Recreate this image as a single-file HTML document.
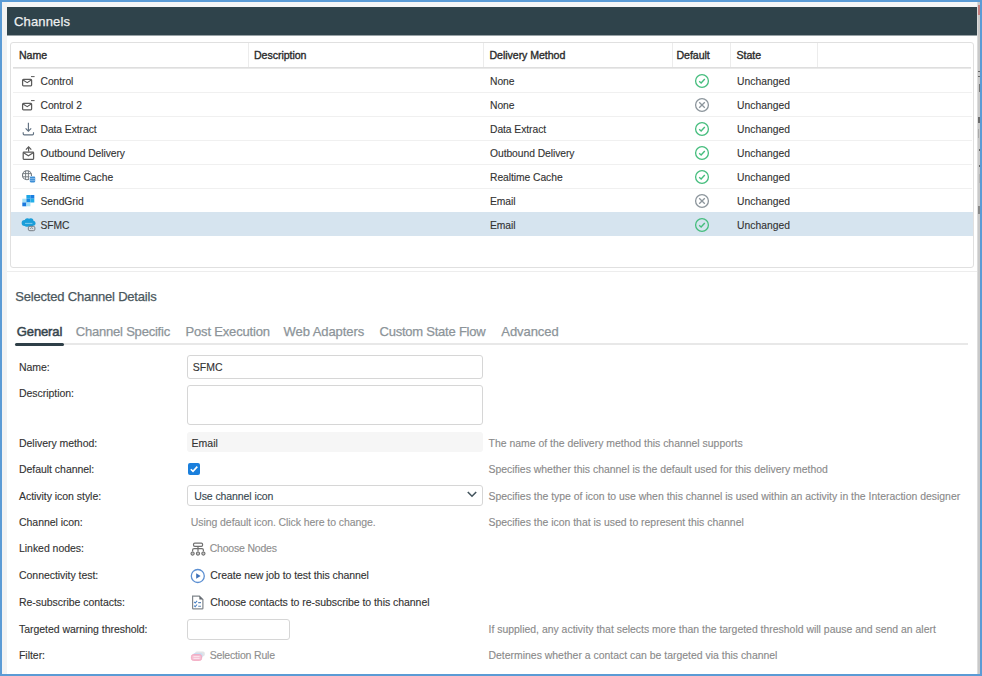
<!DOCTYPE html>
<html><head><meta charset="utf-8">
<style>
*{box-sizing:border-box;margin:0;padding:0}
html,body{width:982px;height:676px;overflow:hidden;background:#fff}
body{font-family:"Liberation Sans",sans-serif;position:relative}
.a{position:absolute;white-space:nowrap}
svg{display:block}
</style></head><body>
<div class="a" style="left:0px;top:0px;width:982px;height:676px;background:#5b9bd5"></div>
<div class="a" style="left:2px;top:2px;width:978px;height:672px;background:#fff"></div>
<div class="a" style="left:2px;top:2px;width:975px;height:5px;background:#f6f6f6"></div>
<div class="a" style="left:2px;top:2px;width:5px;height:672px;background:#f3f3f3"></div>
<div class="a" style="left:977px;top:2px;width:3px;height:672px;background:#c9c9c9"></div>
<div class="a" style="left:977px;top:2px;width:1px;height:672px;background:#dcdcdc"></div>
<div class="a" style="left:978px;top:5px;width:2px;height:10px;background:#c47f7f"></div>
<div class="a" style="left:978px;top:71px;width:2px;height:1px;background:#666"></div>
<div class="a" style="left:978px;top:76px;width:2px;height:1px;background:#666"></div>
<div class="a" style="left:979px;top:84px;width:1px;height:8px;background:#777"></div>
<div class="a" style="left:978px;top:117px;width:2px;height:6px;background:#6a6a6a"></div>
<div class="a" style="left:978px;top:129px;width:1px;height:9px;background:#aaa"></div>
<div class="a" style="left:979px;top:149px;width:1px;height:2px;background:#666"></div>
<div class="a" style="left:979px;top:165px;width:1px;height:2px;background:#666"></div>
<div class="a" style="left:979px;top:174px;width:1px;height:9px;background:#b5b5b5"></div>
<div class="a" style="left:978px;top:206px;width:2px;height:8px;background:#888"></div>
<div class="a" style="left:7px;top:7px;width:970px;height:28px;background:#2f434b"></div>
<div class="a" style="left:7px;top:35px;width:970px;height:1px;background:#98a2a6"></div>
<div class="a" style="left:14px;top:15.00px;font-size:13px;line-height:14px;color:#eef0f1;font-weight:normal;-webkit-text-stroke:0.25px #eef0f1;letter-spacing:0.14px;">Channels</div>
<div class="a" style="left:10px;top:42px;width:964px;height:226px;border:1px solid #e0e0e0;border-radius:3px;background:#fff"></div>
<div class="a" style="left:248px;top:43px;width:1px;height:25px;background:#ececec"></div>
<div class="a" style="left:483px;top:43px;width:1px;height:25px;background:#ececec"></div>
<div class="a" style="left:672px;top:43px;width:1px;height:25px;background:#ececec"></div>
<div class="a" style="left:730px;top:43px;width:1px;height:25px;background:#ececec"></div>
<div class="a" style="left:817px;top:43px;width:1px;height:25px;background:#ececec"></div>
<div class="a" style="left:13px;top:67px;width:958px;height:1px;background:#dedede"></div>
<div class="a" style="left:13px;top:68px;width:958px;height:1px;background:#e9e9e9"></div>
<div class="a" style="left:19px;top:48.00px;font-size:10.6px;line-height:14px;color:#2b2b2b;font-weight:normal;-webkit-text-stroke:0.35px #2b2b2b;letter-spacing:-0.05px;">Name</div>
<div class="a" style="left:254px;top:48.00px;font-size:10.6px;line-height:14px;color:#2b2b2b;font-weight:normal;-webkit-text-stroke:0.35px #2b2b2b;letter-spacing:-0.05px;">Description</div>
<div class="a" style="left:489.5px;top:48.00px;font-size:10.6px;line-height:14px;color:#2b2b2b;font-weight:normal;-webkit-text-stroke:0.35px #2b2b2b;letter-spacing:-0.05px;">Delivery Method</div>
<div class="a" style="left:676.5px;top:48.00px;font-size:10.6px;line-height:14px;color:#2b2b2b;font-weight:normal;-webkit-text-stroke:0.35px #2b2b2b;letter-spacing:-0.05px;">Default</div>
<div class="a" style="left:736.5px;top:48.00px;font-size:10.6px;line-height:14px;color:#2b2b2b;font-weight:normal;-webkit-text-stroke:0.35px #2b2b2b;letter-spacing:-0.05px;">State</div>
<div class="a" style="left:13px;top:92px;width:959px;height:1px;background:#f0f0f0"></div>
<div class="a" style="left:18px;top:68px;width:20px;height:24px"><svg width="20" height="24" viewBox="0 0 20 24"><path d="M4.6 12.2 Q4.6 11.3 5.5 11.3 H12.9 Q13.6 11.3 13.6 12.2 V17 Q13.6 17.8 12.9 17.8 H5.5 Q4.6 17.8 4.6 17 Z" fill="none" stroke="#5a5a5a" stroke-width="1.25"/><path d="M5 12 L9.2 14.6 L13.2 12" fill="none" stroke="#5a5a5a" stroke-width="1.1"/><path d="M13 8.6 H16.6" stroke="#5a5a5a" stroke-width="1"/></svg></div>
<div class="a" style="left:40.5px;top:75.00px;font-size:10.3px;line-height:14px;color:#333333;font-weight:normal;letter-spacing:-0.05px;-webkit-text-stroke:0.12px #333333;">Control</div>
<div class="a" style="left:490px;top:75.00px;font-size:10.3px;line-height:14px;color:#333333;font-weight:normal;letter-spacing:-0.05px;-webkit-text-stroke:0.12px #333333;">None</div>
<div class="a" style="left:737px;top:75.00px;font-size:10.3px;line-height:14px;color:#333333;font-weight:normal;letter-spacing:0.05px;-webkit-text-stroke:0.12px #333333;">Unchanged</div>
<div class="a" style="left:694px;top:73px;width:16px;height:16px"><svg width="16" height="16" viewBox="0 0 16 16"><circle cx="8" cy="8" r="6.4" fill="none" stroke="#45bd7d" stroke-width="1.3"/><path d="M5.2 8.3 L7.1 10 L10.8 6" fill="none" stroke="#45bd7d" stroke-width="1.4"/></svg></div>
<div class="a" style="left:13px;top:116px;width:959px;height:1px;background:#f0f0f0"></div>
<div class="a" style="left:18px;top:92px;width:20px;height:24px"><svg width="20" height="24" viewBox="0 0 20 24"><path d="M4.6 12.2 Q4.6 11.3 5.5 11.3 H12.9 Q13.6 11.3 13.6 12.2 V17 Q13.6 17.8 12.9 17.8 H5.5 Q4.6 17.8 4.6 17 Z" fill="none" stroke="#5a5a5a" stroke-width="1.25"/><path d="M5 12 L9.2 14.6 L13.2 12" fill="none" stroke="#5a5a5a" stroke-width="1.1"/><path d="M13 8.6 H16.6" stroke="#5a5a5a" stroke-width="1"/></svg></div>
<div class="a" style="left:40.5px;top:99.00px;font-size:10.3px;line-height:14px;color:#333333;font-weight:normal;letter-spacing:-0.05px;-webkit-text-stroke:0.12px #333333;">Control 2</div>
<div class="a" style="left:490px;top:99.00px;font-size:10.3px;line-height:14px;color:#333333;font-weight:normal;letter-spacing:-0.05px;-webkit-text-stroke:0.12px #333333;">None</div>
<div class="a" style="left:737px;top:99.00px;font-size:10.3px;line-height:14px;color:#333333;font-weight:normal;letter-spacing:0.05px;-webkit-text-stroke:0.12px #333333;">Unchanged</div>
<div class="a" style="left:694px;top:97px;width:16px;height:16px"><svg width="16" height="16" viewBox="0 0 16 16"><circle cx="8" cy="8" r="6.4" fill="none" stroke="#8c959c" stroke-width="1.3"/><path d="M5.2 5.2 L10.8 10.8 M10.8 5.2 L5.2 10.8" fill="none" stroke="#8c959c" stroke-width="1.3"/></svg></div>
<div class="a" style="left:13px;top:140px;width:959px;height:1px;background:#f0f0f0"></div>
<div class="a" style="left:18px;top:116px;width:20px;height:24px"><svg width="20" height="24" viewBox="0 0 20 24"><path d="M10.4 6.8 V15" stroke="#607080" stroke-width="1.15" fill="none"/><path d="M7.6 12.3 L10.4 15.1 L13.2 12.3" stroke="#607080" stroke-width="1.15" fill="none"/><path d="M5.2 16.3 V17.8 Q5.2 18.8 6.2 18.8 H14.5 Q15.5 18.8 15.5 17.8 V16.3" stroke="#607080" stroke-width="1.15" fill="none"/></svg></div>
<div class="a" style="left:40.5px;top:123.00px;font-size:10.3px;line-height:14px;color:#333333;font-weight:normal;letter-spacing:-0.05px;-webkit-text-stroke:0.12px #333333;">Data Extract</div>
<div class="a" style="left:490px;top:123.00px;font-size:10.3px;line-height:14px;color:#333333;font-weight:normal;letter-spacing:-0.05px;-webkit-text-stroke:0.12px #333333;">Data Extract</div>
<div class="a" style="left:737px;top:123.00px;font-size:10.3px;line-height:14px;color:#333333;font-weight:normal;letter-spacing:0.05px;-webkit-text-stroke:0.12px #333333;">Unchanged</div>
<div class="a" style="left:694px;top:121px;width:16px;height:16px"><svg width="16" height="16" viewBox="0 0 16 16"><circle cx="8" cy="8" r="6.4" fill="none" stroke="#45bd7d" stroke-width="1.3"/><path d="M5.2 8.3 L7.1 10 L10.8 6" fill="none" stroke="#45bd7d" stroke-width="1.4"/></svg></div>
<div class="a" style="left:13px;top:164px;width:959px;height:1px;background:#f0f0f0"></div>
<div class="a" style="left:18px;top:140px;width:20px;height:24px"><svg width="20" height="24" viewBox="0 0 20 24"><path d="M10.6 11.5 V7.5" stroke="#5a5a5a" stroke-width="1.2"/><path d="M7.9 9.6 L10.6 6.9 L13.3 9.6" stroke="#5a5a5a" stroke-width="1.25" fill="none"/><path d="M5.2 12.9 Q5.2 12.2 5.9 12.2 H14.9 Q15.6 12.2 15.6 12.9 V18.6 Q15.6 19.3 14.9 19.3 H5.9 Q5.2 19.3 5.2 18.6 Z" fill="none" stroke="#5a5a5a" stroke-width="1.25"/><path d="M5.6 12.8 L10.4 15.8 L15.2 12.8" fill="none" stroke="#5a5a5a" stroke-width="1.15"/></svg></div>
<div class="a" style="left:40.5px;top:147.00px;font-size:10.3px;line-height:14px;color:#333333;font-weight:normal;letter-spacing:-0.05px;-webkit-text-stroke:0.12px #333333;">Outbound Delivery</div>
<div class="a" style="left:490px;top:147.00px;font-size:10.3px;line-height:14px;color:#333333;font-weight:normal;letter-spacing:-0.05px;-webkit-text-stroke:0.12px #333333;">Outbound Delivery</div>
<div class="a" style="left:737px;top:147.00px;font-size:10.3px;line-height:14px;color:#333333;font-weight:normal;letter-spacing:0.05px;-webkit-text-stroke:0.12px #333333;">Unchanged</div>
<div class="a" style="left:694px;top:145px;width:16px;height:16px"><svg width="16" height="16" viewBox="0 0 16 16"><circle cx="8" cy="8" r="6.4" fill="none" stroke="#45bd7d" stroke-width="1.3"/><path d="M5.2 8.3 L7.1 10 L10.8 6" fill="none" stroke="#45bd7d" stroke-width="1.4"/></svg></div>
<div class="a" style="left:13px;top:188px;width:959px;height:1px;background:#f0f0f0"></div>
<div class="a" style="left:18px;top:164px;width:20px;height:24px"><svg width="20" height="24" viewBox="0 0 20 24"><circle cx="9" cy="11.2" r="4.5" fill="none" stroke="#6f767c" stroke-width="1.1"/><path d="M4.6 9.6 H13.4 M4.6 12.8 H13.4 M7.6 6.8 V15.6 M10.4 6.8 V15.6" stroke="#6f767c" stroke-width="0.9" fill="none"/><rect x="11.2" y="12" width="6.6" height="7" rx="1.4" fill="#fff"/><rect x="11.8" y="12.6" width="5.4" height="5.8" rx="1.1" fill="#3e8fd6"/><path d="M11.8 14.5 H17.2 M11.8 16.4 H17.2" stroke="#a9cdef" stroke-width="0.6"/></svg></div>
<div class="a" style="left:40.5px;top:171.00px;font-size:10.3px;line-height:14px;color:#333333;font-weight:normal;letter-spacing:-0.05px;-webkit-text-stroke:0.12px #333333;">Realtime Cache</div>
<div class="a" style="left:490px;top:171.00px;font-size:10.3px;line-height:14px;color:#333333;font-weight:normal;letter-spacing:-0.05px;-webkit-text-stroke:0.12px #333333;">Realtime Cache</div>
<div class="a" style="left:737px;top:171.00px;font-size:10.3px;line-height:14px;color:#333333;font-weight:normal;letter-spacing:0.05px;-webkit-text-stroke:0.12px #333333;">Unchanged</div>
<div class="a" style="left:694px;top:169px;width:16px;height:16px"><svg width="16" height="16" viewBox="0 0 16 16"><circle cx="8" cy="8" r="6.4" fill="none" stroke="#45bd7d" stroke-width="1.3"/><path d="M5.2 8.3 L7.1 10 L10.8 6" fill="none" stroke="#45bd7d" stroke-width="1.4"/></svg></div>
<div class="a" style="left:13px;top:212px;width:959px;height:1px;background:#f0f0f0"></div>
<div class="a" style="left:18px;top:188px;width:20px;height:24px"><svg width="20" height="24" viewBox="0 0 20 24"><rect x="8.4" y="7" width="4" height="3.7" fill="#1ea6e6"/><rect x="12.4" y="7" width="3.9" height="3.7" fill="#1a7fe0"/><rect x="4.3" y="10.7" width="4.1" height="3.8" fill="#a6e0f5"/><rect x="8.4" y="10.7" width="4" height="3.8" fill="#1689e2"/><rect x="12.4" y="10.7" width="3.9" height="3.8" fill="#22aee8"/><rect x="4.3" y="14.5" width="4.1" height="3.8" fill="#1a79de"/><rect x="8.4" y="14.5" width="4" height="3.8" fill="#a6e0f5"/></svg></div>
<div class="a" style="left:40.5px;top:195.00px;font-size:10.3px;line-height:14px;color:#333333;font-weight:normal;letter-spacing:-0.05px;-webkit-text-stroke:0.12px #333333;">SendGrid</div>
<div class="a" style="left:490px;top:195.00px;font-size:10.3px;line-height:14px;color:#333333;font-weight:normal;letter-spacing:-0.05px;-webkit-text-stroke:0.12px #333333;">Email</div>
<div class="a" style="left:737px;top:195.00px;font-size:10.3px;line-height:14px;color:#333333;font-weight:normal;letter-spacing:0.05px;-webkit-text-stroke:0.12px #333333;">Unchanged</div>
<div class="a" style="left:694px;top:193px;width:16px;height:16px"><svg width="16" height="16" viewBox="0 0 16 16"><circle cx="8" cy="8" r="6.4" fill="none" stroke="#8c959c" stroke-width="1.3"/><path d="M5.2 5.2 L10.8 10.8 M10.8 5.2 L5.2 10.8" fill="none" stroke="#8c959c" stroke-width="1.3"/></svg></div>
<div class="a" style="left:11px;top:212px;width:962px;height:24px;background:#d6e4ef"></div>
<div class="a" style="left:18px;top:212px;width:20px;height:24px"><svg width="20" height="24" viewBox="0 0 20 24"><g fill="#1b9ed9"><circle cx="6.6" cy="10.9" r="3"/><circle cx="9.4" cy="8.9" r="2.7"/><circle cx="12.8" cy="8.8" r="2.6"/><circle cx="15" cy="11.3" r="2.5"/><rect x="6.4" y="9.5" width="8.8" height="5.3" rx="2"/></g><path d="M7 11.4 H14.4" stroke="#9ad6f1" stroke-width="0.8"/><rect x="10.3" y="14.3" width="6.6" height="4.4" rx="1.5" fill="#dadfe3" stroke="#6a7279" stroke-width="0.9"/><path d="M12.1 16.8 L13.6 15.7 L15.1 16.8" stroke="#6a7279" stroke-width="0.7" fill="none"/></svg></div>
<div class="a" style="left:40.5px;top:219.00px;font-size:10.3px;line-height:14px;color:#333333;font-weight:normal;letter-spacing:-0.05px;-webkit-text-stroke:0.12px #333333;">SFMC</div>
<div class="a" style="left:490px;top:219.00px;font-size:10.3px;line-height:14px;color:#333333;font-weight:normal;letter-spacing:-0.05px;-webkit-text-stroke:0.12px #333333;">Email</div>
<div class="a" style="left:737px;top:219.00px;font-size:10.3px;line-height:14px;color:#333333;font-weight:normal;letter-spacing:0.05px;-webkit-text-stroke:0.12px #333333;">Unchanged</div>
<div class="a" style="left:694px;top:217px;width:16px;height:16px"><svg width="16" height="16" viewBox="0 0 16 16"><circle cx="8" cy="8" r="6.4" fill="none" stroke="#45bd7d" stroke-width="1.3"/><path d="M5.2 8.3 L7.1 10 L10.8 6" fill="none" stroke="#45bd7d" stroke-width="1.4"/></svg></div>
<div class="a" style="left:7px;top:271px;width:970px;height:1px;background:#ededed"></div>
<div class="a" style="left:15.3px;top:290.00px;font-size:13px;line-height:14px;color:#4a575d;font-weight:normal;-webkit-text-stroke:0.25px #4a575d;letter-spacing:-0.2px;">Selected Channel Details</div>
<div class="a" style="left:15px;top:343px;width:953px;height:2px;background:#e8e8e8"></div>
<div class="a" style="left:15px;top:343px;width:49px;height:3px;background:#2f3f48;border-radius:1.5px"></div>
<div class="a" style="left:16.8px;top:325.00px;font-size:13px;line-height:14px;color:#36454d;font-weight:normal;-webkit-text-stroke:0.5px #36454d;letter-spacing:-0.12px;">General</div>
<div class="a" style="left:75.8px;top:325.00px;font-size:13px;line-height:14px;color:#8c9499;font-weight:normal;-webkit-text-stroke:0.25px #8c9499;letter-spacing:-0.21px;">Channel Specific</div>
<div class="a" style="left:185.5px;top:325.00px;font-size:13px;line-height:14px;color:#8c9499;font-weight:normal;-webkit-text-stroke:0.25px #8c9499;letter-spacing:-0.17px;">Post Execution</div>
<div class="a" style="left:283.5px;top:325.00px;font-size:13px;line-height:14px;color:#8c9499;font-weight:normal;-webkit-text-stroke:0.25px #8c9499;letter-spacing:-0.06px;">Web Adapters</div>
<div class="a" style="left:379.5px;top:325.00px;font-size:13px;line-height:14px;color:#8c9499;font-weight:normal;-webkit-text-stroke:0.25px #8c9499;letter-spacing:-0.23px;">Custom State Flow</div>
<div class="a" style="left:501.3px;top:325.00px;font-size:13px;line-height:14px;color:#8c9499;font-weight:normal;-webkit-text-stroke:0.25px #8c9499;letter-spacing:-0.07px;">Advanced</div>
<div class="a" style="left:19px;top:360.00px;font-size:10.5px;line-height:14px;color:#333333;font-weight:normal;letter-spacing:-0.04px;-webkit-text-stroke:0.12px #333333;">Name:</div>
<div class="a" style="left:19px;top:386.00px;font-size:10.5px;line-height:14px;color:#333333;font-weight:normal;letter-spacing:-0.04px;-webkit-text-stroke:0.12px #333333;">Description:</div>
<div class="a" style="left:19px;top:436.00px;font-size:10.5px;line-height:14px;color:#333333;font-weight:normal;letter-spacing:-0.04px;-webkit-text-stroke:0.12px #333333;">Delivery method:</div>
<div class="a" style="left:19px;top:462.00px;font-size:10.5px;line-height:14px;color:#333333;font-weight:normal;letter-spacing:-0.04px;-webkit-text-stroke:0.12px #333333;">Default channel:</div>
<div class="a" style="left:19px;top:489.00px;font-size:10.5px;line-height:14px;color:#333333;font-weight:normal;letter-spacing:-0.04px;-webkit-text-stroke:0.12px #333333;">Activity icon style:</div>
<div class="a" style="left:19px;top:515.00px;font-size:10.5px;line-height:14px;color:#333333;font-weight:normal;letter-spacing:-0.04px;-webkit-text-stroke:0.12px #333333;">Channel icon:</div>
<div class="a" style="left:19px;top:541.00px;font-size:10.5px;line-height:14px;color:#333333;font-weight:normal;letter-spacing:-0.04px;-webkit-text-stroke:0.12px #333333;">Linked nodes:</div>
<div class="a" style="left:19px;top:568.00px;font-size:10.5px;line-height:14px;color:#333333;font-weight:normal;letter-spacing:-0.04px;-webkit-text-stroke:0.12px #333333;">Connectivity test:</div>
<div class="a" style="left:19px;top:595.00px;font-size:10.5px;line-height:14px;color:#333333;font-weight:normal;letter-spacing:-0.04px;-webkit-text-stroke:0.12px #333333;">Re-subscribe contacts:</div>
<div class="a" style="left:19px;top:622.00px;font-size:10.5px;line-height:14px;color:#333333;font-weight:normal;letter-spacing:-0.04px;-webkit-text-stroke:0.12px #333333;">Targeted warning threshold:</div>
<div class="a" style="left:19px;top:648.00px;font-size:10.5px;line-height:14px;color:#333333;font-weight:normal;letter-spacing:-0.04px;-webkit-text-stroke:0.12px #333333;">Filter:</div>
<div class="a" style="left:187px;top:355px;width:296px;height:24px;border:1px solid #d6d6d6;border-radius:3px;background:#fff"></div>
<div class="a" style="left:192.8px;top:360.00px;font-size:10.5px;line-height:14px;color:#333333;font-weight:normal;-webkit-text-stroke:0.12px #333333;">SFMC</div>
<div class="a" style="left:187px;top:385px;width:296px;height:40px;border:1px solid #d6d6d6;border-radius:3px;background:#fff"></div>
<div class="a" style="left:187px;top:432px;width:296px;height:20px;border-radius:3px;background:#f6f6f6"></div>
<div class="a" style="left:191.6px;top:436.00px;font-size:10.5px;line-height:14px;color:#333333;font-weight:normal;-webkit-text-stroke:0.12px #333333;">Email</div>
<div class="a" style="left:488.5px;top:437.00px;font-size:10.45px;line-height:14px;color:#8a8a8a;font-weight:normal;-webkit-text-stroke:0.12px #8a8a8a;">The name of the delivery method this channel supports</div>
<div class="a" style="left:188px;top:463px;width:12px;height:12px;background:#1a7fdc;border-radius:2px"></div>
<div class="a" style="left:188px;top:463px;width:12px;height:12px"><svg width="12" height="12" viewBox="0 0 12 12"><path d="M2.8 6.2 L5 8.4 L9.3 3.6" fill="none" stroke="#fff" stroke-width="1.6"/></svg></div>
<div class="a" style="left:488.5px;top:463.00px;font-size:10.45px;line-height:14px;color:#8a8a8a;font-weight:normal;-webkit-text-stroke:0.12px #8a8a8a;">Specifies whether this channel is the default used for this delivery method</div>
<div class="a" style="left:187px;top:485px;width:296px;height:21px;border:1px solid #d6d6d6;border-radius:3px;background:#fff"></div>
<div class="a" style="left:194.2px;top:489.00px;font-size:10.5px;line-height:14px;color:#37474f;font-weight:normal;letter-spacing:-0.09px;-webkit-text-stroke:0.12px #37474f;">Use channel icon</div>
<div class="a" style="left:466px;top:490px;width:12px;height:9px"><svg width="12" height="9" viewBox="0 0 12 9"><path d="M1.8 2 L6 6.2 L10.2 2" fill="none" stroke="#44555e" stroke-width="1.6"/></svg></div>
<div class="a" style="left:488.5px;top:490.00px;font-size:10.45px;line-height:14px;color:#8a8a8a;font-weight:normal;-webkit-text-stroke:0.12px #8a8a8a;">Specifies the type of icon to use when this channel is used within an activity in the Interaction designer</div>
<div class="a" style="left:190.8px;top:515.00px;font-size:10.5px;line-height:14px;color:#8e8e8e;font-weight:normal;letter-spacing:-0.075px;-webkit-text-stroke:0.12px #8e8e8e;">Using default icon. Click here to change.</div>
<div class="a" style="left:488.5px;top:516.00px;font-size:10.45px;line-height:14px;color:#8a8a8a;font-weight:normal;-webkit-text-stroke:0.12px #8a8a8a;">Specifies the icon that is used to represent this channel</div>
<div class="a" style="left:190px;top:541px;width:16px;height:16px"><svg width="16" height="16" viewBox="0 0 16 16"><rect x="3.5" y="2.1" width="9.1" height="3.2" rx="1.3" fill="none" stroke="#707070" stroke-width="1.2"/><path d="M8 5.3 V7.6 M2.6 10.6 V9.1 Q2.6 7.6 4.1 7.6 H11.9 Q13.4 7.6 13.4 9.1 V10.6 M8 7.6 V10.6" fill="none" stroke="#707070" stroke-width="1.2"/><circle cx="2.6" cy="12.6" r="1.6" fill="#c8c8c8" stroke="#707070" stroke-width="1.1"/><circle cx="8" cy="12.6" r="1.6" fill="#c8c8c8" stroke="#707070" stroke-width="1.1"/><circle cx="13.4" cy="12.6" r="1.6" fill="#c8c8c8" stroke="#707070" stroke-width="1.1"/></svg></div>
<div class="a" style="left:209.7px;top:541.00px;font-size:10.5px;line-height:14px;color:#8e8e8e;font-weight:normal;letter-spacing:-0.2px;-webkit-text-stroke:0.12px #8e8e8e;">Choose Nodes</div>
<div class="a" style="left:190px;top:568px;width:16px;height:16px"><svg width="16" height="16" viewBox="0 0 16 16"><circle cx="7.8" cy="8" r="6.5" fill="none" stroke="#5b8fd2" stroke-width="1.3"/><path d="M6.2 5.2 L10.6 8 L6.2 10.8 Z" fill="#3d70b8"/></svg></div>
<div class="a" style="left:210.2px;top:568.00px;font-size:10.5px;line-height:14px;color:#333333;font-weight:normal;letter-spacing:-0.07px;-webkit-text-stroke:0.12px #333333;">Create new job to test this channel</div>
<div class="a" style="left:191px;top:595px;width:13px;height:15px"><svg width="13" height="15" viewBox="0 0 13 15"><path d="M1.6 1.1 H8.4 L11.9 4.6 V13.3 Q11.9 13.9 11.3 13.9 H2.2 Q1.6 13.9 1.6 13.3 Z" fill="#fff" stroke="#80868c" stroke-width="1.2"/><path d="M8.4 1.1 V4.6 H11.9 Z" fill="#60666c"/><path d="M3.1 6.9 L4.2 8 L6.1 5.8 M3.1 10.6 L4.2 11.7 L6.1 9.5" fill="none" stroke="#4a82c4" stroke-width="1.05"/><path d="M7.2 7.6 H10 M7.2 11.3 H10" stroke="#5f86b5" stroke-width="1.1"/></svg></div>
<div class="a" style="left:210.2px;top:595.00px;font-size:10.5px;line-height:14px;color:#333333;font-weight:normal;letter-spacing:-0.04px;-webkit-text-stroke:0.12px #333333;">Choose contacts to re-subscribe to this channel</div>
<div class="a" style="left:187px;top:619px;width:103px;height:21px;border:1px solid #d6d6d6;border-radius:3px;background:#fff"></div>
<div class="a" style="left:488.5px;top:623.00px;font-size:10.45px;line-height:14px;color:#8a8a8a;font-weight:normal;-webkit-text-stroke:0.12px #8a8a8a;">If supplied, any activity that selects more than the targeted threshold will pause and send an alert</div>
<div class="a" style="left:190px;top:650px;width:16px;height:12px"><svg width="16" height="12" viewBox="0 0 16 12"><rect x="5" y="1.6" width="9.8" height="4.8" rx="1.8" fill="#e2e4e6"/><rect x="3.2" y="3" width="9.4" height="5.4" rx="1.8" fill="#c9def2"/><rect x="1.4" y="4.6" width="10.2" height="5.8" rx="2" fill="#f6bfd2" stroke="#f2a7c0" stroke-width="0.9"/><path d="M3.4 6.6 H9.6 M3.4 8.4 H9.6" stroke="#fde9f0" stroke-width="0.9"/></svg></div>
<div class="a" style="left:209.7px;top:648.00px;font-size:10.5px;line-height:14px;color:#8e8e8e;font-weight:normal;letter-spacing:-0.18px;-webkit-text-stroke:0.12px #8e8e8e;">Selection Rule</div>
<div class="a" style="left:488.5px;top:649.00px;font-size:10.45px;line-height:14px;color:#8a8a8a;font-weight:normal;-webkit-text-stroke:0.12px #8a8a8a;">Determines whether a contact can be targeted via this channel</div>
</body></html>
